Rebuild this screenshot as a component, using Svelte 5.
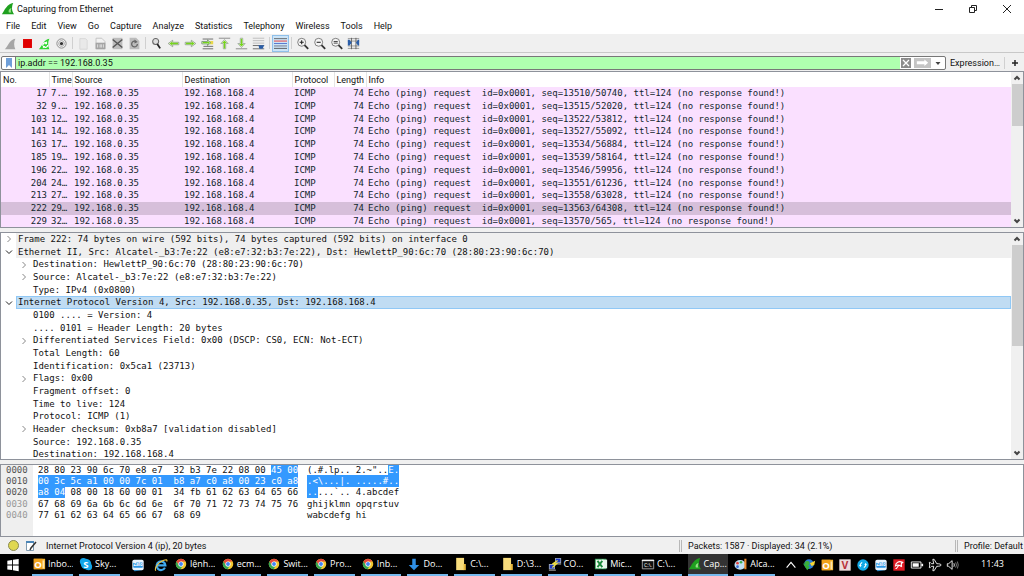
<script lang="ts">
  // Capture window: packet list, protocol tree and byte view stacked over a
  // status bar, with the desktop taskbar underneath.

  interface Packet {
    no: number;
    time: string;
    seq: string;
  }

  interface TreeRow {
    text: string;
    depth: number;
    // 'open' / 'closed' draw an expander, undefined is a leaf
    state?: 'open' | 'closed';
    tone?: 'top' | 'selected';
  }

  interface Task {
    icon: string;
    label: string;
    active?: boolean;
  }

  const menus = ['File', 'Edit', 'View', 'Go', 'Capture', 'Analyze', 'Statistics', 'Telephony', 'Wireless', 'Tools', 'Help'];

  const toolGroups = [
    ['fin-off', 'stop', 'restart', 'options'],
    ['open', 'save', 'close-file', 'reload'],
    ['find', 'back', 'forward', 'goto', 'first', 'last', 'autoscroll'],
    ['colorize'],
    ['zoom-in', 'zoom-out', 'zoom-reset', 'resize'],
  ];

  const packets: Packet[] = [
    { no: 17, time: '7.…', seq: '13510/50740' },
    { no: 32, time: '9.…', seq: '13515/52020' },
    { no: 103, time: '12…', seq: '13522/53812' },
    { no: 141, time: '14…', seq: '13527/55092' },
    { no: 163, time: '17…', seq: '13534/56884' },
    { no: 185, time: '19…', seq: '13539/58164' },
    { no: 196, time: '22…', seq: '13546/59956' },
    { no: 204, time: '24…', seq: '13551/61236' },
    { no: 213, time: '27…', seq: '13558/63028' },
    { no: 222, time: '29…', seq: '13563/64308' },
    { no: 229, time: '32…', seq: '13570/565' },
  ];

  const tree: TreeRow[] = [
    { depth: 0, state: 'closed', tone: 'top', text: 'Frame 222: 74 bytes on wire (592 bits), 74 bytes captured (592 bits) on interface 0' },
    { depth: 0, state: 'open', tone: 'top', text: 'Ethernet II, Src: Alcatel-_b3:7e:22 (e8:e7:32:b3:7e:22), Dst: HewlettP_90:6c:70 (28:80:23:90:6c:70)' },
    { depth: 1, state: 'closed', text: 'Destination: HewlettP_90:6c:70 (28:80:23:90:6c:70)' },
    { depth: 1, state: 'closed', text: 'Source: Alcatel-_b3:7e:22 (e8:e7:32:b3:7e:22)' },
    { depth: 1, text: 'Type: IPv4 (0x0800)' },
    { depth: 0, state: 'open', tone: 'selected', text: 'Internet Protocol Version 4, Src: 192.168.0.35, Dst: 192.168.168.4' },
    { depth: 1, text: '0100 .... = Version: 4' },
    { depth: 1, text: '.... 0101 = Header Length: 20 bytes' },
    { depth: 1, state: 'closed', text: 'Differentiated Services Field: 0x00 (DSCP: CS0, ECN: Not-ECT)' },
    { depth: 1, text: 'Total Length: 60' },
    { depth: 1, text: 'Identification: 0x5ca1 (23713)' },
    { depth: 1, state: 'closed', text: 'Flags: 0x00' },
    { depth: 1, text: 'Fragment offset: 0' },
    { depth: 1, text: 'Time to live: 124' },
    { depth: 1, text: 'Protocol: ICMP (1)' },
    { depth: 1, state: 'closed', text: 'Header checksum: 0xb8a7 [validation disabled]' },
    { depth: 1, text: 'Source: 192.168.0.35' },
    { depth: 1, text: 'Destination: 192.168.168.4' },
  ];

  const bytes = (
    '28 80 23 90 6c 70 e8 e7 32 b3 7e 22 08 00 45 00 ' +
    '00 3c 5c a1 00 00 7c 01 b8 a7 c0 a8 00 23 c0 a8 ' +
    'a8 04 08 00 18 60 00 01 34 fb 61 62 63 64 65 66 ' +
    '67 68 69 6a 6b 6c 6d 6e 6f 70 71 72 73 74 75 76 ' +
    '77 61 62 63 64 65 66 67 68 69'
  ).split(' ');

  // the IPv4 header inside the frame
  const selStart = 14;
  const selEnd = 34;

  function ascii(byte: string): string {
    const n = parseInt(byte, 16);
    return n >= 0x20 && n < 0x7f ? String.fromCharCode(n) : '.';
  }

  // Splits one 16-byte line in [before, selected, after]. Separators between
  // two bytes of the same part stay in it, so the highlight has no holes.
  function split(line: number, kind: 'hex' | 'ascii'): string[] {
    const parts = ['', '', ''];
    const start = line * 16;
    const end = Math.min(start + 16, bytes.length);
    let prev = -1;
    for (let i = start; i < end; i++) {
      const part = i < selStart ? 0 : i < selEnd ? 1 : 2;
      const mid = i - start === 8;
      const sep = kind === 'hex' ? (mid ? '  ' : ' ') : mid ? ' ' : '';
      if (prev >= 0) parts[part === 1 && prev === 0 ? 0 : part] += sep;
      parts[part] += kind === 'hex' ? bytes[i] : ascii(bytes[i]);
      prev = part;
    }
    return parts;
  }

  const lines = [0, 1, 2, 3, 4].map((n) => ({
    offset: (n * 16).toString(16).padStart(4, '0'),
    hex: split(n, 'hex'),
    ascii: split(n, 'ascii'),
  }));

  const tasks: Task[] = [
    { icon: 'chrome', label: 'lệnh...' },
    { icon: 'chrome', label: 'ecm...' },
    { icon: 'chrome', label: 'Swit...' },
    { icon: 'chrome', label: 'Pro...' },
    { icon: 'chrome', label: 'Inb...' },
    { icon: 'download', label: 'Do...' },
    { icon: 'folder', label: 'C:\\...' },
    { icon: 'folder', label: 'D:\\3...' },
    { icon: 'putty', label: 'CO...' },
    { icon: 'excel', label: 'Mic...' },
    { icon: 'cmd', label: 'C:\\...' },
    { icon: 'fin', label: 'Cap...', active: true },
    { icon: 'paint', label: 'Alca...' },
  ];

  const tray = ['up', 'idm', 'outlook', 'vee', 'sync', 'zalo', 'avira', 'battery', 'plane', 'speaker'];

  let filter = $state('ip.addr == 192.168.0.35');
  let selected = $state(222);
</script>

{#snippet icon(name: string)}
  <svg class="icon" viewBox="0 0 16 16" aria-hidden="true"><use href="#{name}" /></svg>
{/snippet}

{#snippet scroller(kind: string)}
  <div class="scroller {kind}">
    <svg viewBox="0 0 12 12" aria-hidden="true"><path d="M3.5 7.5 6 5l2.500 2.500" /></svg>
    <span class="thumb"></span>
    <svg class="down" viewBox="0 0 12 12" aria-hidden="true"><path d="M3.500 4.500 6 7l2.500-2.500" /></svg>
  </div>
{/snippet}

{#snippet run(parts: string[])}{parts[0]}{#if parts[1]}<mark>{parts[1]}</mark>{/if}{parts[2]}{/snippet}

<svg class="sprite" aria-hidden="true">
  <symbol id="fin" viewBox="0 0 16 16">
    <path d="M1 14C4 9 7 2 14 1c-2 4-2 9 1 13z" fill="#1fa01f" />
    <path d="M9 12c-1-3 1-5 3-5-1 2-1 4 0 5z" fill="#9be08c" />
  </symbol>
  <symbol id="fin-off" viewBox="0 0 16 16">
    <path d="M1 15C5 11 7 3 14 2c-2 4-2 9 0 13z" fill="#a6a6a6" />
  </symbol>
  <symbol id="stop" viewBox="0 0 16 16"><path d="M2.500 2.500h11v11h-11z" fill="#e00000" /></symbol>
  <symbol id="restart" viewBox="0 0 16 16">
    <path d="M1 15C5 11 7 3 14 2c-2 4-2 9 0 13z" fill="#2fd52f" />
    <path d="M6 11a3 3 0 0 1 5-3M12 10a3 3 0 0 1-5 2" fill="none" stroke="#fff" stroke-width="1.500" />
    <path d="M11 5v4H8zM6 14v-3h3z" fill="#fff" />
  </symbol>
  <symbol id="options" viewBox="0 0 16 16">
    <circle cx="8" cy="8" r="5.700" fill="#f5f5f5" stroke="#777" />
    <circle cx="8" cy="8" r="3.500" fill="none" stroke="#999" />
    <circle cx="8" cy="8" r="2" fill="#333" />
  </symbol>
  <symbol id="open" viewBox="0 0 16 16"><path d="M3.500 2h7l2 2v11h-9z" fill="#e9e9e9" stroke="#d4d4d4" /></symbol>
  <symbol id="save" viewBox="0 0 16 16">
    <path d="M2.500 1.500h7l4 4v9h-11z" fill="#f2f2f2" stroke="#bbb" />
    <path d="M2 7h12v8H2z" fill="#a4a4a4" />
    <path d="M4.500 9v4M7.500 9v4M9 9v4M11.500 9v4" stroke="#eee" />
  </symbol>
  <symbol id="close-file" viewBox="0 0 16 16">
    <path d="M2 1h12v14H2z" fill="#bcbcbc" />
    <path d="m2 3 12 10M14 3 2 13" stroke="#555" stroke-width="1.800" />
  </symbol>
  <symbol id="reload" viewBox="0 0 16 16">
    <path d="M2 1h8l4 4v10H2z" fill="#bcbcbc" />
    <path d="M11.500 8.500a3.500 3.500 0 1 1-2-3" fill="none" stroke="#666" stroke-width="1.600" />
    <path d="M8 3v5l4-2z" fill="#666" />
  </symbol>
  <symbol id="find" viewBox="0 0 16 16">
    <circle cx="7" cy="5.500" r="3.700" fill="#ddd" stroke="#666" stroke-width="1.300" />
    <path d="m9 8.500 3.500 5.500" stroke="#222" stroke-width="2.200" />
  </symbol>
  <symbol id="back" viewBox="0 0 16 16">
    <path d="M1.500 8 7 4v2.500h7.500v3H7V12z" fill="#f4fbe8" stroke="#8a9a86" />
    <path d="M3 8l3.500-2.500v1.700h7v1.600h-7v1.700z" fill="#76d41c" />
  </symbol>
  <symbol id="forward" viewBox="0 0 16 16">
    <path d="M14.500 8 9 4v2.500H1.500v3H9V12z" fill="#f4fbe8" stroke="#8a9a86" />
    <path d="M13 8 9.500 5.500v1.700h-7v1.600h7v1.700z" fill="#76d41c" />
  </symbol>
  <symbol id="goto" viewBox="0 0 16 16">
    <path d="M2 2.500h13M2 14.500h13M3 11.500h12" stroke="#555" />
    <path d="M11 5h4v4h-4z" fill="#e8d84a" />
    <path d="M12 7 8 3.500v2H1v3h7v2z" fill="#f4fbe8" stroke="#6b8f6b" />
    <path d="M11 7 8.500 5v1.200H2v1.600h6.500V9z" fill="#76d41c" />
  </symbol>
  <symbol id="first" viewBox="0 0 16 16">
    <path d="M1 1.500h14" stroke="#777" />
    <path d="m8 3 4.500 5H9.500v6.500h-3V8h-3z" fill="#f4fbe8" stroke="#9aa79a" />
    <path d="m8 4.200 3 3.300H8.900V14H7.100V7.500H5z" fill="#76d41c" />
  </symbol>
  <symbol id="last" viewBox="0 0 16 16">
    <path d="M1 14.500h14" stroke="#777" />
    <path d="m8 13 4.500-5H9.500V1.500h-3V8h-3z" fill="#f4fbe8" stroke="#9aa79a" />
    <path d="m8 11.800 3-3.300H8.900V2H7.100v6.500H5z" fill="#76d41c" />
  </symbol>
  <symbol id="autoscroll" viewBox="0 0 16 16">
    <path d="M1 1.500h14M1 4.500h14M1 7.500h14" stroke="#b4b4b4" />
    <path d="M1 10.500h14M1 14.500h14" stroke="#555" />
    <path d="M8 10h7l-2 4.500H9z" fill="#2b5ea8" />
  </symbol>
  <symbol id="colorize" viewBox="0 0 16 16">
    <path d="M0 2h16" stroke="#555" />
    <path d="M0 5h16" stroke="#e85050" stroke-width="1.300" />
    <path d="M0 8h16" stroke="#5a7cd0" stroke-width="1.300" />
    <path d="M0 11h16" stroke="#667" /><path d="M0 14h16" stroke="#444" />
  </symbol>
  <symbol id="lens" viewBox="0 0 16 16">
    <circle cx="7" cy="6.500" r="4.900" fill="#f6f6f6" stroke="#666" />
    <path d="m10.500 10 4.500 4.500" stroke="#333" stroke-width="2.200" />
  </symbol>
  <symbol id="zoom-in" viewBox="0 0 16 16"><use href="#lens" /><path d="M4.500 6.500h5M7 4v5" stroke="#222" stroke-width="1.300" /></symbol>
  <symbol id="zoom-out" viewBox="0 0 16 16"><use href="#lens" /><path d="M4.500 6.500h5" stroke="#222" stroke-width="1.300" /></symbol>
  <symbol id="zoom-reset" viewBox="0 0 16 16"><use href="#lens" /><path d="M4.500 5.500h5M4.500 7.500h5" stroke="#222" /></symbol>
  <symbol id="resize" viewBox="0 0 16 16">
    <path d="M1 2h14M1 5h14M1 11h14M1 14h14" stroke="#888" />
    <path d="M5.500 1v14M11 1v14" stroke="#555" />
    <path d="M1 3.500h2L6 7 3 10.500H1zM15 3.500h-1.500L11 7l2.500 3.500H15z" fill="#2b5ea8" />
  </symbol>

  <symbol id="windows" viewBox="0 0 16 16">
    <path d="m1.500 3 5.500-.8v5.300H1.500zM8 2l6.500-1v6.500H8zM1.500 8.500H7v5.300l-5.500-.8zM8 8.500h6.500V15L8 14z" fill="#fff" />
  </symbol>
  <symbol id="outlook" viewBox="0 0 16 16">
    <path d="M2 2h13v12H2z" fill="#f5b52e" />
    <path d="M9 4h5v9H9z" fill="#fbe6b0" />
    <path d="M2 2h10v12H2z" fill="#f0a21c" />
    <text x="7" y="12" font-size="11" font-weight="bold" text-anchor="middle" fill="#fff">O</text>
  </symbol>
  <symbol id="skype" viewBox="0 0 16 16">
    <circle cx="8" cy="8" r="6" fill="#12a5e8" /><circle cx="5" cy="5" r="4" fill="#12a5e8" /><circle cx="11" cy="11" r="4" fill="#12a5e8" />
    <text x="8" y="12" font-size="11" font-weight="bold" text-anchor="middle" fill="#fff">S</text>
  </symbol>
  <symbol id="zalo" viewBox="0 0 16 16">
    <rect x="1.500" y="2" width="13" height="12" rx="2" fill="#e8f5ff" />
    <path d="M3 14h10l-9 1z" fill="#2d9be8" />
    <rect x="2.500" y="5" width="11" height="6" rx="1" fill="#2d95e4" />
    <text x="8" y="9.700" font-size="5" font-weight="bold" text-anchor="middle" fill="#fff">Zalo</text>
  </symbol>
  <symbol id="ie" viewBox="0 0 16 16">
    <path d="M12.500 11A5 5 0 1 1 13 8.500H4" fill="none" stroke="#3fa9ee" stroke-width="2.500" />
    <path d="M2 14.500C0 11 6 3 14 2c1 0 1 1 .5 2" fill="none" stroke="#f3c944" stroke-width="1.200" />
  </symbol>
  <symbol id="chrome" viewBox="0 0 16 16">
    <circle cx="8" cy="8" r="6" fill="#f2c62e" />
    <path d="M2.800 5A6 6 0 0 1 13.200 5H8L5.500 9.500z" fill="#e2453a" />
    <path d="M2.800 5A6 6 0 0 0 7.500 14L10 10 8 8 5.500 9.500z" fill="#35a652" />
    <circle cx="8" cy="8" r="3" fill="#fff" /><circle cx="8" cy="8" r="2.200" fill="#4285f4" />
  </symbol>
  <symbol id="download" viewBox="0 0 16 16"><path d="M6 2h4v7h4l-6 6-6-6h4z" fill="#2f8fe6" /></symbol>
  <symbol id="folder" viewBox="0 0 16 16">
    <path d="M2.500 1h9v14h-9z" fill="#f8dc7c" /><path d="M11 8h2.500v7H11z" fill="#e8b83c" />
  </symbol>
  <symbol id="putty" viewBox="0 0 16 16">
    <path d="M8 1h7v6H8zM1 8h7v6H1z" fill="#9aa6b8" /><path d="M9 2h5v4H9zM2 9h5v4H2z" fill="#1b36c4" />
    <path d="M1 15h8M9 8h6" stroke="#ccc" /><path d="m11 4-6 4 5-.5-5 4.500" fill="none" stroke="#f4e23c" stroke-width="1.400" />
  </symbol>
  <symbol id="excel" viewBox="0 0 16 16">
    <path d="M1 2h13v12H1z" fill="#2a9a50" /><path d="M9 3h6v10H9z" fill="#e6f5ea" /><path d="M2 3h9v10H2z" fill="#f0f8f0" />
    <path d="m4 4.500 5.500 7M9.500 4.500 4 11.500" stroke="#1d8b3d" stroke-width="2.200" />
  </symbol>
  <symbol id="cmd" viewBox="0 0 16 16">
    <path d="M1.500 3.500h13v10h-13z" fill="#111" stroke="#aaa" /><path d="M1 4h14" stroke="#eee" stroke-width="1.500" />
    <text x="8" y="11" font-size="6" text-anchor="middle" fill="#fff">C:\.</text>
  </symbol>
  <symbol id="paint" viewBox="0 0 16 16">
    <ellipse cx="7" cy="9" rx="6.500" ry="5.500" fill="#bfe0f5" />
    <circle cx="4" cy="7" r="1.500" fill="#e04040" /><circle cx="8" cy="6" r="1.500" fill="#3cab4c" /><circle cx="4" cy="11" r="1.500" fill="#3568d4" />
    <path d="M13 2v12" stroke="#e98a2e" stroke-width="2.400" />
  </symbol>

  <symbol id="up" viewBox="0 0 16 16"><path d="m3 11 5-6 5 6" fill="none" stroke="#fff" stroke-width="1.300" /></symbol>
  <symbol id="idm" viewBox="0 0 16 16">
    <circle cx="8" cy="7" r="5.500" fill="#2c7bd0" /><path d="M3 5c4-4 7 0 5 3s-5 0-5-3z" fill="#3bb13b" />
    <path d="m9 6 6-3-1 5-3 1z" fill="#f3d535" /><path d="m1 6 8 4-3 4z" fill="#35b035" />
  </symbol>
  <symbol id="vee" viewBox="0 0 16 16">
    <path d="M1.500 1.500h13v13h-13z" fill="#ecdcdc" /><text x="8" y="12.500" font-size="12" font-weight="bold" text-anchor="middle" fill="#b8343c">V</text>
  </symbol>
  <symbol id="sync" viewBox="0 0 16 16">
    <circle cx="8" cy="8" r="6.500" fill="#13a9e6" />
    <path d="M5 9V7l2-2M11 7v2l-2 2" fill="none" stroke="#fff" stroke-width="1.300" />
    <path d="M3.500 8h3L5 10.500zM9.500 8h3L11 5.500z" fill="#fff" />
  </symbol>
  <symbol id="avira" viewBox="0 0 16 16">
    <path d="M1.500 1.500h13v13h-13z" fill="#e01b24" />
    <path d="M4 9c0-4 4-6 8-4-2 1-2 2-1 5-2-2-4-3-7-1zM8 8l-3 4h-1" fill="none" stroke="#fff" stroke-width="1.300" />
  </symbol>
  <symbol id="battery" viewBox="0 0 16 16">
    <path d="M1.500 4.500h11v7h-11z" fill="none" stroke="#fff" /><path d="M3 6h7v4H3zM13 6.500h2v3h-2z" fill="#fff" />
  </symbol>
  <symbol id="plane" viewBox="0 0 16 16">
    <path d="M15 8c0-1-2-1.500-5-1.500L7 1.500H5.500l1 5H4L2.500 5h-1l.5 3-.5 3h1L4 9.500h2.500l-1 5H7l3-5c3 0 5-.5 5-1.500z" fill="none" stroke="#fff" />
  </symbol>
  <symbol id="speaker" viewBox="0 0 16 16">
    <path d="M1.500 6.500H3l4-3.500v10L3 9.500H1.500z" fill="none" stroke="#fff" />
    <path d="M9 6q1 2 0 4" fill="none" stroke="#fff" /><path d="M11 5q2 3 0 6M13 4q2 4 0 8" fill="none" stroke="#888" />
  </symbol>
</svg>

<div class="desktop">
  <header class="titlebar">
    {@render icon('fin')}
    <h1>Capturing from Ethernet</h1>
    <div class="window-buttons">
      <button aria-label="Minimize"><svg viewBox="0 0 10 10"><path d="M1 5.500h8" /></svg></button>
      <button aria-label="Restore"><svg viewBox="0 0 10 10"><path d="M1.500 3.500h5v5h-5zM3.500 3V1.500h5v5H7" /></svg></button>
      <button aria-label="Close"><svg viewBox="0 0 10 10"><path d="m1 1 8 8M9 1 1 9" /></svg></button>
    </div>
  </header>

  <nav class="menubar">
    {#each menus as menu (menu)}
      <button>{menu}</button>
    {/each}
  </nav>

  <div class="toolbar" role="toolbar" aria-label="Main toolbar">
    {#each toolGroups as group, i (i)}
      {#if i > 0}<span class="sep"></span>{/if}
      {#each group as tool (tool)}
        <button class:pressed={tool === 'colorize'} aria-label={tool}>{@render icon(tool)}</button>
      {/each}
    {/each}
  </div>

  <form class="filterbar" onsubmit={(e) => e.preventDefault()}>
    <div class="filterbox">
      <button type="button" class="bookmark" aria-label="Bookmarks">
        <svg viewBox="0 0 8 12"><path d="M1 1h6v10L4 8l-3 3z" fill="#6f9fd8" /></svg>
      </button>
      <input aria-label="Display filter" bind:value={filter} spellcheck="false" />
      <button type="button" class="clear" aria-label="Clear" onclick={() => (filter = '')}>
        <svg viewBox="0 0 10 10"><path d="m2 2 6 6M8 2 2 8" stroke="#fff" stroke-width="1.300" /></svg>
      </button>
      <button class="apply" aria-label="Apply">
        <svg viewBox="0 0 18 10"><path d="M3 3.500h8V1.500L15 5l-4 3.500v-2H3z" fill="#fff" /></svg>
      </button>
      <button type="button" class="history" aria-label="Recent filters">
        <svg viewBox="0 0 8 8"><path d="M1.500 3h5L4 6z" fill="#444" /></svg>
      </button>
    </div>
    <button type="button" class="expression">Expression…</button>
    <button type="button" class="plus" aria-label="Add filter button">
      <svg viewBox="0 0 8 8"><path d="M1 4h6M4 1v6" stroke="#222" stroke-width="1.500" /></svg>
    </button>
  </form>

  <main class="panes">
    <section class="pane">
      <div class="content">
        <table>
          <colgroup>
            <col class="c-no" /><col class="c-time" /><col class="c-addr" /><col class="c-addr" />
            <col class="c-proto" /><col class="c-len" /><col />
          </colgroup>
          <thead>
            <tr>
              <th>No.</th><th>Time</th><th>Source</th><th>Destination</th><th>Protocol</th><th>Length</th><th>Info</th>
            </tr>
          </thead>
          <tbody>
            {#each packets as p (p.no)}
              <tr class:selected={selected === p.no} onclick={() => (selected = p.no)}>
                <td class="num">{p.no}</td>
                <td>{p.time}</td>
                <td>192.168.0.35</td>
                <td>192.168.168.4</td>
                <td>ICMP</td>
                <td class="num">74</td>
                <td>Echo (ping) request&nbsp; id=0x0001, seq={p.seq}, ttl=124 (no response found!)</td>
              </tr>
            {/each}
          </tbody>
        </table>
      </div>
      {@render scroller('short')}
    </section>

    <section class="pane">
      <div class="content">
        <ul class="tree" role="tree">
          {#each tree as row (row.text)}
            <li role="treeitem" aria-selected={row.tone === 'selected'} class={row.tone} class:child={row.depth === 1}>
              <span class="twist">
                {#if row.state}
                  <svg class={row.state} viewBox="0 0 8 8" aria-hidden="true"><path d="m2.500 1 3 3-3 3" /></svg>
                {/if}
              </span>
              <span class="label">{row.text}</span>
            </li>
          {/each}
        </ul>
      </div>
      {@render scroller('long')}
    </section>

    <section class="pane bytes">
      <div class="dump">
        {#each lines as line, i (line.offset)}
          <span class="offset" class:dim={i > 2}>{line.offset}</span>
          <span class="hex">{@render run(line.hex)}</span>
          <span class="ascii">{@render run(line.ascii)}</span>
        {/each}
      </div>
    </section>
  </main>

  <footer class="status">
    <span class="expert"></span>
    <svg class="note" viewBox="0 0 12 12" aria-hidden="true">
      <path d="M1.500 1.500h7v9h-7z" fill="#fff" stroke="#7f9ab0" />
      <path d="M1 1h8v2H1z" fill="#4c86b8" />
      <path d="m11 2-5 6-1 2" stroke="#333" stroke-width="1.500" fill="none" />
    </svg>
    <span class="field">Internet Protocol Version 4 (ip), 20 bytes</span>
    <span class="counts">Packets: 1587 · Displayed: 34 (2.1%)</span>
    <span class="profile">Profile: Default</span>
  </footer>

  <nav class="taskbar">
    <button class="start" aria-label="Start">{@render icon('windows')}</button>
    <button class="task fixed">{@render icon('outlook')}<span>Inbo...</span></button>
    <button class="task fixed">{@render icon('skype')}<span>Sky...</span></button>
    <button class="pinned" aria-label="Zalo">{@render icon('zalo')}</button>
    <button class="pinned" aria-label="Internet Explorer">{@render icon('ie')}</button>
    <div class="tasks">
      {#each tasks as task, i (i)}
        <button class="task" class:active={task.active}>{@render icon(task.icon)}<span>{task.label}</span></button>
      {/each}
    </div>
    <div class="tray">
      {#each tray as name (name)}
        <button aria-label={name}>{@render icon(name)}</button>
      {/each}
    </div>
    <time>11:43</time>
  </nav>
</div>

<style>
  :global(body) {
    margin: 0;
  }
  .sprite {
    display: none;
  }
  .desktop {
    --line: #8e929b;
    --bar: #f0f0f0;
    height: 100vh;
    display: flex;
    flex-direction: column;
    background: var(--bar);
    color: #111;
    font-family: Roboto, 'Open Sans', sans-serif;
    font-size: 9px;
    line-height: 12px;
    overflow: hidden;
  }
  button {
    display: flex;
    align-items: center;
    justify-content: center;
    margin: 0;
    padding: 0;
    border: 0;
    background: none;
    color: inherit;
    font: inherit;
    white-space: nowrap;
  }
  .icon {
    width: 14px;
    height: 14px;
    flex: none;
  }

  .titlebar {
    display: flex;
    align-items: center;
    gap: 2px;
    height: 17px;
    padding-left: 1px;
    background: #fff;
  }
  .titlebar h1 {
    margin: 0;
    flex: 1;
    font-size: 9px;
    font-weight: 400;
  }
  .window-buttons {
    display: flex;
  }
  .window-buttons button {
    width: 34px;
  }
  .window-buttons svg {
    width: 10px;
    height: 10px;
    fill: none;
    stroke: #222;
  }

  .menubar {
    display: flex;
    gap: 11px;
    height: 17px;
    padding-left: 6px;
    background: #fff;
  }

  .toolbar {
    display: flex;
    align-items: center;
    height: 18px;
    padding-left: 2px;
    border-bottom: 1px solid #c8c8c8;
  }
  .toolbar button {
    width: 17px;
    height: 17px;
  }
  .toolbar .icon {
    width: 13px;
    height: 13px;
  }
  .toolbar .pressed {
    background: #cce4f7;
    box-shadow: inset 0 0 0 1px #8fc0ea;
  }
  .sep {
    width: 1px;
    height: 12px;
    margin: 0 2px;
    background: #d0d0d0;
  }

  .filterbar {
    display: flex;
    align-items: center;
    height: 17px;
    padding: 1px 0 0 1px;
  }
  .filterbox {
    flex: 1;
    display: flex;
    align-items: center;
    height: 12px;
    border: 1px solid #777;
    border-radius: 2px;
    background: #fff;
  }
  .bookmark {
    width: 13px;
  }
  .bookmark svg {
    width: 8px;
    height: 12px;
  }
  .filterbox input {
    flex: 1;
    min-width: 0;
    height: 12px;
    box-sizing: border-box;
    padding: 0 2px;
    border: 0;
    border-left: 1px solid #777;
    background: #afffaf;
    color: #111;
    font: inherit;
    outline: 0;
  }
  .clear {
    width: 10px;
    height: 10px;
    margin: 0 3px 0 1px;
    background: #8c8c8c;
  }
  .apply {
    width: 17px;
    height: 10px;
    background: #c4c4c4;
  }
  .history {
    width: 14px;
  }
  .history svg,
  .plus svg {
    width: 8px;
    height: 8px;
  }
  .expression {
    width: 58px;
  }
  .plus {
    width: 20px;
    height: 12px;
    border-left: 1px solid #d0d0d0;
  }

  .panes {
    flex: 1;
    min-height: 0;
    display: grid;
    grid-template-rows: 157fr 228fr 73fr;
    gap: 4px;
    font-family: 'DejaVu Sans Mono', 'Liberation Mono', monospace;
  }
  .pane {
    display: flex;
    min-height: 0;
    overflow: hidden;
    border: 1px solid var(--line);
    background: #fff;
  }
  .content {
    flex: 1;
    min-width: 0;
    overflow: hidden;
  }

  table {
    width: 100%;
    height: 156px;
    table-layout: fixed;
    border-collapse: collapse;
  }
  .c-no {
    width: 48px;
  }
  .c-time {
    width: 23px;
  }
  .c-addr {
    width: 110px;
  }
  .c-proto {
    width: 42px;
  }
  .c-len {
    width: 32px;
  }
  thead tr {
    height: 15px;
  }
  th,
  td {
    padding: 0 2px;
    overflow: hidden;
    text-align: left;
    white-space: nowrap;
  }
  th {
    border-right: 1px solid #e5e5e5;
    font-family: Roboto, 'Open Sans', sans-serif;
    font-weight: 400;
  }
  th:last-child {
    border-right: 0;
  }
  tbody tr {
    background: #fae0ff;
    color: #12272e;
  }
  tbody tr.selected {
    background: #d6bfda;
  }
  td {
    line-height: 11px;
  }
  .num {
    text-align: right;
  }

  .scroller {
    display: flex;
    flex-direction: column;
    align-items: center;
    width: 12px;
    background: #f0f0f0;
  }
  .scroller svg {
    width: 12px;
    height: 12px;
    fill: none;
    stroke: #444;
    stroke-width: 2;
  }
  .thumb {
    width: 11px;
    background: #cdcdcd;
  }
  .short .thumb {
    height: 42px;
  }
  .long .thumb {
    height: 101px;
  }
  .down {
    margin-top: auto;
  }

  .tree {
    display: grid;
    grid-auto-rows: 1fr;
    height: 228px;
    margin: 0;
    padding: 0;
    list-style: none;
    line-height: 12px;
  }
  .tree li {
    display: flex;
    align-items: stretch;
  }
  .tree .child {
    padding-left: 15px;
  }
  .twist {
    display: flex;
    align-items: center;
    justify-content: center;
    width: 15px;
  }
  .twist svg {
    width: 8px;
    height: 8px;
    fill: none;
    stroke: #888;
  }
  .twist .open {
    transform: rotate(90deg);
    stroke: #222;
  }
  .label {
    flex: 1;
    padding-left: 2px;
    white-space: nowrap;
  }
  .top .label {
    background: #efefef;
  }
  .selected .label {
    background: #c0dcf3;
    box-shadow: inset 0 0 0 1px #90c8f6;
  }

  .dump {
    flex: 1;
    display: grid;
    grid-template-columns: 32px 269px 1fr;
    grid-template-rows: repeat(5, 1fr);
    height: 56px;
    line-height: 11px;
  }
  .bytes {
    background: linear-gradient(to right, #efefef 32px, #fff 32px);
  }
  .offset {
    padding-left: 5px;
    color: #555;
  }
  .dim {
    color: #999;
  }
  .hex,
  .ascii {
    padding-left: 5px;
    white-space: pre;
  }
  mark {
    padding: 1px 0;
    background: #3399ff;
    color: #fff;
  }

  .status {
    display: flex;
    align-items: center;
    height: 17px;
    padding-left: 8px;
  }
  .expert {
    width: 9px;
    height: 9px;
    border: 1px solid #8a8a50;
    border-radius: 50%;
    background: #e0d850;
  }
  .note {
    width: 12px;
    height: 12px;
    margin: 0 9px 0 6px;
  }
  .field {
    flex: 1;
  }
  .counts,
  .profile {
    border-left: 3px double #b8b8b8;
    padding-left: 6px;
    white-space: nowrap;
  }
  .counts {
    width: 267px;
  }
  .profile {
    width: 60px;
  }

  .taskbar {
    display: flex;
    height: 22px;
    background: #000;
    color: #fff;
    font-family: 'Open Sans', 'Noto Sans', sans-serif;
  }
  .start {
    width: 26px;
    margin-right: 6px;
  }
  .task {
    flex: 1;
    min-width: 0;
    box-sizing: border-box;
    justify-content: flex-start;
    gap: 2px;
    overflow: hidden;
    border-bottom: 2px solid #76b9ed;
  }
  .task.fixed {
    flex: none;
    width: 41px;
    margin-right: 6px;
  }
  .task.active {
    background: #333;
  }
  .pinned {
    width: 23px;
  }
  .tasks {
    flex: 1;
    min-width: 0;
    display: flex;
    gap: 6px;
    padding: 0 7px 0 2px;
  }
  .tray {
    display: flex;
  }
  .tray button {
    width: 18px;
  }
  time {
    width: 62px;
    padding-left: 19px;
    box-sizing: border-box;
    line-height: 20px;
  }
</style>
